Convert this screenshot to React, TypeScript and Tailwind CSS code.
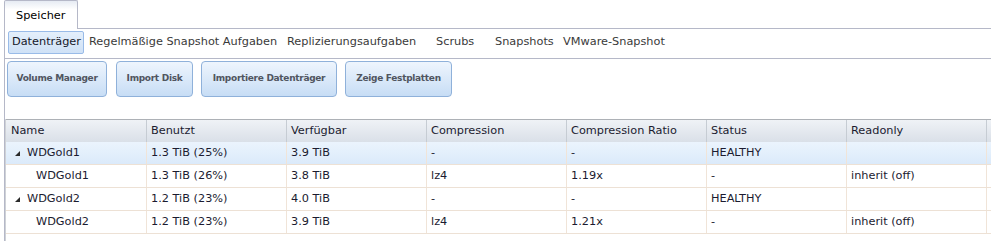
import React from "react";

const cols = ["Name", "Benutzt", "Verfügbar", "Compression", "Compression Ratio", "Status", "Readonly"];

type Row = { name: string; parent: boolean; cells: string[]; hl?: boolean };
const rows: Row[] = [
  { name: "WDGold1", parent: true, hl: true, cells: ["1.3 TiB (25%)", "3.9 TiB", "-", "-", "HEALTHY", ""] },
  { name: "WDGold1", parent: false, cells: ["1.3 TiB (26%)", "3.8 TiB", "lz4", "1.19x", "-", "inherit (off)"] },
  { name: "WDGold2", parent: true, cells: ["1.2 TiB (23%)", "4.0 TiB", "-", "-", "HEALTHY", ""] },
  { name: "WDGold2", parent: false, cells: ["1.2 TiB (23%)", "3.9 TiB", "lz4", "1.21x", "-", "inherit (off)"] },
];

const subtabs: { label: string; w: string }[] = [
  { label: "Regelmäßige Snapshot Aufgaben", w: "w-[198px]" },
  { label: "Replizierungsaufgaben", w: "w-[149px]" },
  { label: "Scrubs", w: "w-[59px]" },
  { label: "Snapshots", w: "w-[68px]" },
  { label: "VMware-Snapshot", w: "w-[120px]" },
];

const buttons: { label: string; w: string }[] = [
  { label: "Volume Manager", w: "w-[100px]" },
  { label: "Import Disk", w: "w-[77px]" },
  { label: "Importiere Datenträger", w: "w-[136px]" },
  { label: "Zeige Festplatten", w: "w-[107px]" },
];

function Triangle() {
  return (
    <svg width="5" height="5" viewBox="0 0 5 5" className="shrink-0">
      <polygon points="5,0 5,5 0,5" fill="#2a2a2a" />
    </svg>
  );
}

export default function App() {
  return (
    <div className="w-[991px] h-[241px] overflow-hidden bg-white font-['DejaVu_Sans',sans-serif] text-[11.3px] text-[#1b1b30]">
      {/* Tab strip */}
      <div className="flex h-[29px]">
        <div className="w-[4px]" />
        <div className="w-[74px] h-[29px] border-t border-l border-r border-[#b5b8c8] rounded-t-[2px] bg-linear-to-b from-[#e6ebf3] via-white via-[30%] to-white flex items-center pl-[11px] pt-[3px] text-black">
          Speicher
        </div>
        <div className="flex-1 border-b border-[#b5b8c8]" />
      </div>

      {/* Body */}
      <div className="ml-[4px] border-l border-[#b5b8c8] h-[212px]">
        {/* Sub tabs */}
        <div className="h-[30px] border-b border-[#b5b8c8] flex items-start pt-[2px] pl-[3px] text-[#3a3a3a] whitespace-nowrap">
          <div className="w-[76px] h-[23px] border border-[#99bbe8] rounded-[2px] bg-linear-to-b from-[#e4effb] to-[#cfe1f6] flex items-center pl-[3px] text-[#15182a]">
            Datenträger
          </div>
          <div className="w-[5px]" />
          {subtabs.map((t) => (
            <div key={t.label} className={`${t.w} h-[23px] flex items-center shrink-0`}>
              {t.label}
            </div>
          ))}
        </div>

        {/* Buttons */}
        <div className="h-[60px] flex items-start pt-[2px] pl-[2px]">
          {buttons.map((b, i) => (
            <div
              key={b.label}
              className={`${b.w} h-[36px] shrink-0 border border-[#8fb1da] rounded-[4px] bg-linear-to-b from-[#eef5fd] to-[#c7ddf5] flex items-center justify-center font-bold text-[9px] tracking-[-0.3px] text-[#505560] whitespace-nowrap ${i === 0 ? "mr-[9px]" : "mr-[8px]"}`}
            >
              {b.label}
            </div>
          ))}
        </div>

        {/* Table */}
        <div className="border-l border-[#cfd2d6] h-[122px]">
          <div className="grid grid-cols-[141px_repeat(6,140px)_1fr] h-[23px] border-t border-[#adb1b6] bg-linear-to-b from-[#eff2f6] to-[#dae0e8]">
            {cols.map((c, i) => (
              <div
                key={c}
                className={`border-r border-[#c6ccd3] flex items-center ${i === 0 ? "pl-[5px]" : "pl-[4px]"}`}
              >
                {c}
              </div>
            ))}
            <div />
          </div>
          {rows.map((r, ri) => (
            <div
              key={ri}
              className={`grid grid-cols-[141px_repeat(6,140px)_1fr] h-[23px] border-b border-[#ede1d5] ${r.hl ? "bg-linear-to-b from-[#ebf4fd] to-[#dbeafa]" : "bg-white"}`}
            >
              <div className="border-r border-[#f0e4d8] flex items-center pl-[5px]">
                {r.parent ? (
                  <>
                    <span className="ml-[4px] mr-[7px] flex items-center pt-[1px]">
                      <Triangle />
                    </span>
                    {r.name}
                  </>
                ) : (
                  <span className="ml-[25px]">{r.name}</span>
                )}
              </div>
              {r.cells.map((c, ci) => (
                <div key={ci} className="border-r border-[#f0e4d8] flex items-center pl-[4px] whitespace-nowrap">
                  {c}
                </div>
              ))}
              <div />
            </div>
          ))}
        </div>
      </div>
    </div>
  );
}
